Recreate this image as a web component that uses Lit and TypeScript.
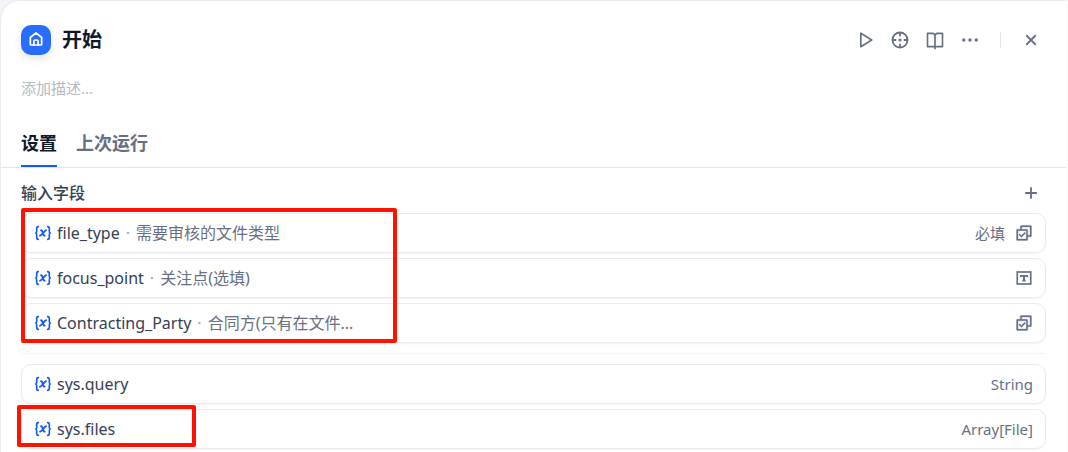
import { LitElement, html, css, svg, nothing } from "lit";
import { customElement, property } from "lit/decorators.js";

const line = (d: string) => svg`<path fill="currentColor" d=${d} />`;

const icons = {
  home: svg`<g fill="none" stroke="currentColor" stroke-width="2.600" stroke-linejoin="round" stroke-linecap="round"><path d="M3.500 9.600 12 3l8.500 6.600V20a1 1 0 0 1-1 1h-15a1 1 0 0 1-1-1z"/><path d="M8.800 21v-5.500a2 2 0 0 1 2-2h2.400a2 2 0 0 1 2 2V21"/></g>`,
  play: line("M8 18.3915V5.60846L18.2264 12L8 18.3915ZM6 3.80421V20.1957C6 20.9812 6.86395 21.46 7.53 21.0437L20.6432 12.848C21.2699 12.4563 21.2699 11.5436 20.6432 11.152L7.53 2.95621C6.86395 2.53993 6 3.01878 6 3.80421Z"),
  locate: svg`<g fill="none" stroke="currentColor" stroke-width="2.200"><circle cx="12" cy="12" r="9"/><path d="M12 3v4.500M12 16.500V21M3 12h4.500M16.500 12H21"/></g><circle cx="12" cy="12" r="1.900" fill="currentColor"/>`,
  book: line("M13 21V23H11V21H3C2.44772 21 2 20.5523 2 20V4C2 3.44772 2.44772 3 3 3H9C10.1947 3 11.2671 3.52375 12 4.35418C12.7329 3.52375 13.8053 3 15 3H21C21.5523 3 22 3.44772 22 4V20C22 20.5523 21.5523 21 21 21H13ZM20 19V5H15C13.8954 5 13 5.89543 13 7V19H20ZM11 19V7C11 5.89543 10.1046 5 9 5H4V19H11Z"),
  more: svg`<g fill="currentColor"><circle cx="4.500" cy="12" r="2"/><circle cx="12" cy="12" r="2"/><circle cx="19.500" cy="12" r="2"/></g>`,
  close: svg`<path fill="none" stroke="currentColor" stroke-width="2.200" d="M6.300 6.300 17.700 17.700M17.700 6.300 6.300 17.700"/>`,
  plus: svg`<path fill="none" stroke="currentColor" stroke-width="2.200" d="M12 5v14M5 12h14"/>`,
  select: svg`<g stroke="currentColor" stroke-width=".4">${line("M6.99979 7V3C6.99979 2.44772 7.4475 2 7.99979 2H20.9998C21.5521 2 21.9998 2.44772 21.9998 3V16C21.9998 16.5523 21.5521 17 20.9998 17H17V20.9925C17 21.5489 16.551 22 15.9925 22H3.00728C2.45086 22 2 21.5511 2 20.9925L2.00276 8.00748C2.00288 7.45107 2.4518 7 3.01025 7H6.99979ZM8.99979 7H15.9927C16.549 7 17 7.44892 17 8.00748V15H19.9998V4H8.99979V7ZM4.00255 9L4.00021 20H15V9H4.00255ZM8.50242 18L4.96689 14.4645L6.3811 13.0503L8.50242 15.1716L12.7451 10.9289L14.1593 12.3431L8.50242 18Z")}</g>`,
  text: svg`<g fill="none" stroke="currentColor" stroke-width="2.200"><rect x="3" y="4" width="18" height="16"/><path d="M7.600 11V9.100h8.800V11M12 9v6.500M9.800 15.500h4.400"/><path stroke-width="2.800" d="M12 9v6"/></g>`,
  variable: svg`<g fill="none" stroke="currentColor" stroke-width="2.200" stroke-linecap="round" stroke-linejoin="round"><path d="M5.800 3.500C3.600 3.500 3.600 4.800 3.600 6v3.500C3.600 11 3.200 12 2.200 12c1 0 1.400 1 1.400 2.500V18c0 1.200 0 2.500 2.200 2.500M18.200 3.500c2.200 0 2.200 1.300 2.200 2.500v3.500c0 1.500.4 2.500 1.400 2.500-1 0-1.400 1-1.400 2.500V18c0 1.200 0 2.500-2.200 2.500"/><path stroke-width="2.500" d="M9.400 8.300c2.800 0 2 7.200 4.800 7.200M16 8.300c-2.200 0-4.800 7.200-8 7.200"/></g>`,
};
type IconName = keyof typeof icons;

@customElement("ui-icon")
class UiIcon extends LitElement {
  @property() name: IconName = "plus";
  static styles = css`
    :host { display: inline-flex; flex: none; width: 20px; height: 20px; }
    svg { width: 100%; height: 100%; }
  `;
  render() {
    return html`<svg viewBox="0 0 24 24" aria-hidden="true">${icons[this.name]}</svg>`;
  }
}

interface Field {
  name: string;
  label?: string;
  required?: boolean;
  icon?: IconName;
  type?: string;
}

const inputs: Field[] = [
  { name: "file_type", label: "需要审核的文件类型", required: true, icon: "select" },
  { name: "focus_point", label: "关注点(选填)", icon: "text" },
  { name: "Contracting_Party", label: "合同方(只有在文件...", icon: "select" },
];
const system: Field[] = [
  { name: "sys.query", type: "String" },
  { name: "sys.files", type: "Array[File]" },
];

@customElement("app-root")
class AppRoot extends LitElement {
  static styles = css`
    :host {
      display: block;
      background: #f2f4f7;
      color: #354052;
      font-family: "Noto Sans", "Noto Sans CJK SC", sans-serif;
      font-size: 16px;
      line-height: 24px;
    }
    * { box-sizing: border-box; }
    button {
      border: 0; padding: 0; background: none; font: inherit; color: inherit;
      display: inline-flex; align-items: center; cursor: pointer;
    }
    .panel {
      min-height: calc(100vh - 1px);
      border: 1px solid #e9ebf0;
      border-right: 2px solid #f9fafb;
      border-bottom: 0;
      border-radius: 20px 0 0 0;
      background: #fff;
    }
    .head { display: flex; align-items: center; padding: 24px 25px 0 20px; }
    .badge {
      display: flex; align-items: center; justify-content: center;
      width: 30px; height: 30px; margin-right: 11px; padding-bottom: 2px;
      border-radius: 10px; background: #296dff; color: #fff;
      box-shadow: 0 4px 8px #1018281a;
    }
    .badge ui-icon { width: 16px; height: 16px; }
    h1 { flex: 1; margin: 0; font-size: 20px; line-height: 30px; font-weight: 700; color: #101828; }
    .tools { display: flex; align-items: center; gap: 15px; color: #676f83; }
    .rule { width: 1px; height: 16px; margin: 0 5px; background: #e4e7ec; }
    .desc {
      display: block; width: calc(100% - 40px); margin: 20px 20px 0; padding: 0;
      border: 0; outline: 0; background: none;
      font: inherit; font-size: 15px; line-height: 26px; color: #98a2b2;
    }
    .desc::placeholder { color: #b4b9c3; opacity: 1; }
    .tabs { display: flex; gap: 19px; padding: 28px 20px 0; border-bottom: 1px solid #e1e4ea; }
    .tab {
      height: 38px; padding-bottom: 8px; border-bottom: 2px solid transparent;
      font-size: 18px; line-height: 26px; font-weight: 700; color: #676f83;
    }
    .tab.on { color: #101828; border-color: #155aef; }
    .body { padding: 13px 20px 3px; }
    .title { display: flex; align-items: center; justify-content: space-between; margin-bottom: 8px; padding-right: 5px; }
    h2 { margin: 0; font-size: 16px; line-height: 24px; font-weight: 500; }
    .title button { color: #676f83; }
    .list { display: grid; gap: 5px; margin: 0; padding: 0; list-style: none; position: relative; }
    .row {
      display: flex; align-items: center; height: 40px; padding: 0 12px;
      border: 1px solid #e9ebf0; border-radius: 10px; background: #fff;
      box-shadow: 0 1px 2px #1018280d;
    }
    .var { width: 18px; height: 18px; margin-right: 5px; color: #155aef; }
    .name { white-space: nowrap; }
    .dot { margin: 0 6px; color: #98a2b2; }
    .label { flex: 1; min-width: 0; overflow: hidden; text-overflow: ellipsis; white-space: nowrap; color: #676f83; }
    .meta { display: flex; align-items: center; gap: 10px; margin-left: auto; font-size: 15px; line-height: 22px; color: #676f83; }
    .meta ui-icon { width: 18px; height: 18px; }
    .sep { height: 1px; margin: 10px 0; border: 0; background: #f2f4f7; }
    .mark { position: absolute; border: 4px solid #ff1200; border-radius: 2px; pointer-events: none; }
    .mark.inputs { top: -5px; left: 0; width: 376px; height: 135px; }
    .mark.files { top: 41px; left: -4px; width: 179px; height: 42px; }
  `;

  private row(f: Field) {
    return html`<li class="row">
      <ui-icon class="var" name="variable"></ui-icon>
      <span class="name">${f.name}</span>
      ${f.label ? html`<span class="dot">·</span><span class="label">${f.label}</span>` : nothing}
      <span class="meta">
        ${f.required ? html`<span>必填</span>` : nothing}
        ${f.type ? html`<span>${f.type}</span>` : nothing}
        ${f.icon ? html`<ui-icon name=${f.icon}></ui-icon>` : nothing}
      </span>
    </li>`;
  }

  private tool(name: IconName, label: string) {
    return html`<button aria-label=${label}><ui-icon name=${name}></ui-icon></button>`;
  }

  render() {
    return html`<main class="panel" lang="zh-CN">
      <header class="head">
        <span class="badge"><ui-icon name="home"></ui-icon></span>
        <h1>开始</h1>
        <div class="tools">
          ${this.tool("play", "运行")} ${this.tool("locate", "定位")}
          ${this.tool("book", "文档")} ${this.tool("more", "更多")}
          <span class="rule"></span>
          ${this.tool("close", "关闭")}
        </div>
      </header>
      <input class="desc" aria-label="描述" placeholder="添加描述..." />
      <nav class="tabs" role="tablist">
        <button class="tab on" role="tab" aria-selected="true">设置</button>
        <button class="tab" role="tab" aria-selected="false">上次运行</button>
      </nav>
      <section class="body">
        <div class="title"><h2>输入字段</h2>${this.tool("plus", "添加")}</div>
        <ul class="list">${inputs.map((f) => this.row(f))}<li class="mark inputs" aria-hidden="true"></li></ul>
        <hr class="sep" />
        <ul class="list">${system.map((f) => this.row(f))}<li class="mark files" aria-hidden="true"></li></ul>
      </section>
    </main>`;
  }
}
